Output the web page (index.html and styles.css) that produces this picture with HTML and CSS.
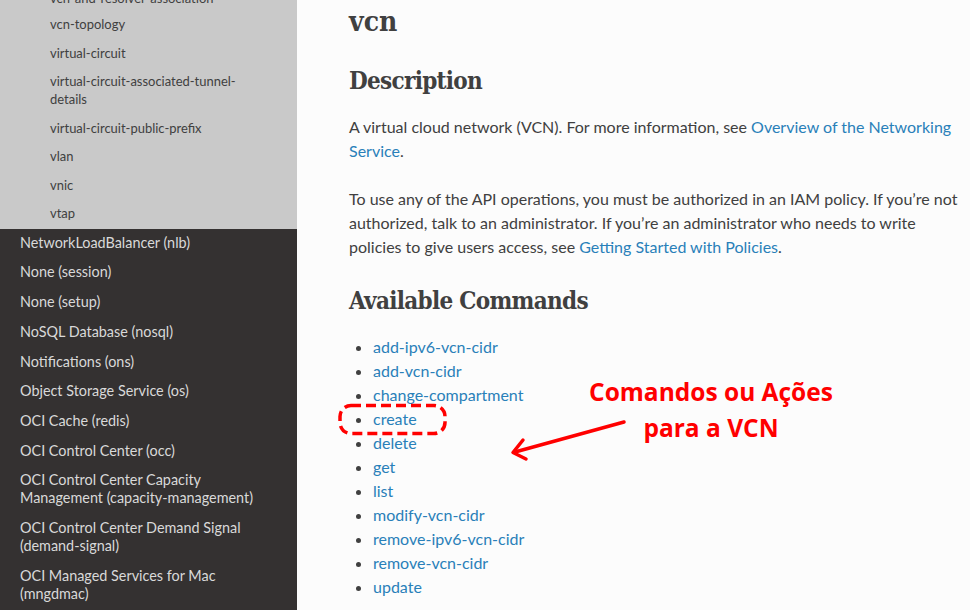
FILE: index.html
```html
<!DOCTYPE html>
<html lang="en">
<head>
<meta charset="utf-8">
<title>vcn</title>
<link rel="stylesheet" href="styles.css">
</head>
<body>
<div class="page">
  <nav class="nav">
    <ul class="sub-list">
      <li><a>vcn-and-resolver-association</a></li>
      <li><a>vcn-topology</a></li>
      <li><a>virtual-circuit</a></li>
      <li><a>virtual-circuit-associated-tunnel-details</a></li>
      <li><a>virtual-circuit-public-prefix</a></li>
      <li><a>vlan</a></li>
      <li><a>vnic</a></li>
      <li><a>vtap</a></li>
    </ul>
    <ul class="top-list">
      <li><a>NetworkLoadBalancer (nlb)</a></li>
      <li><a>None (session)</a></li>
      <li><a>None (setup)</a></li>
      <li><a>NoSQL Database (nosql)</a></li>
      <li><a>Notifications (ons)</a></li>
      <li><a>Object Storage Service (os)</a></li>
      <li><a>OCI Cache (redis)</a></li>
      <li><a>OCI Control Center (occ)</a></li>
      <li><a>OCI Control Center Capacity Management (capacity-management)</a></li>
      <li><a>OCI Control Center Demand Signal (demand-signal)</a></li>
      <li><a>OCI Managed Services for Mac (mngdmac)</a></li>
    </ul>
  </nav>
  <main class="main">
    <div class="content">
      <h1 class="title">vcn</h1>
      <h2 class="section-title">Description</h2>
      <p class="para">A virtual cloud network (VCN). For more information, see <a class="link">Overview of the Networking Service</a>.</p>
      <p class="para">To use any of the API operations, you must be authorized in an IAM policy. If you’re not<br>authorized, talk to an administrator. If you’re an administrator who needs to write<br>policies to give users access, see <a class="link">Getting Started with Policies</a>.</p>
      <h2 class="section-title">Available Commands</h2>
      <ul class="commands">
        <li><a class="link">add-ipv6-vcn-cidr</a></li>
        <li><a class="link">add-vcn-cidr</a></li>
        <li><a class="link">change-compartment</a></li>
        <li><a class="link">create</a></li>
        <li><a class="link">delete</a></li>
        <li><a class="link">get</a></li>
        <li><a class="link">list</a></li>
        <li><a class="link">modify-vcn-cidr</a></li>
        <li><a class="link">remove-ipv6-vcn-cidr</a></li>
        <li><a class="link">remove-vcn-cidr</a></li>
        <li><a class="link">update</a></li>
      </ul>
    </div>
    <svg class="overlay" width="673" height="610" viewBox="297 0 673 610" xmlns="http://www.w3.org/2000/svg">
      <rect x="340" y="405.5" width="105" height="28" rx="11" ry="11" fill="none" stroke="#f00" stroke-width="3.5" stroke-dasharray="10 5"/>
      <line x1="624" y1="422" x2="515" y2="452" stroke="#f00" stroke-width="3.5" stroke-linecap="round"/>
      <polyline points="523,440 513,452.5 526,459" fill="none" stroke="#f00" stroke-width="3.5" stroke-linecap="round" stroke-linejoin="round"/>
    </svg>
    <div class="callout">Comandos ou Ações<br>para a VCN</div>
  </main>
</div>
</body>
</html>
```

FILE: styles.css
```css
html, body {
  margin: 0;
  padding: 0;
  overflow: hidden;
  height: 100%;
}
body {
  font-family: Lato, "Open Sans", sans-serif;
  color: #404040;
  background: #fcfcfc;
}
.page {
  display: flex;
  height: 610px;
  overflow: hidden;
}
.nav {
  width: 297px;
  flex: none;
  background: #343131;
  overflow: hidden;
  display: flex;
  flex-direction: column;
}
.nav ul {
  list-style: none;
  margin: 0;
  padding: 0;
}
.nav a {
  display: block;
  line-height: 18px;
}
.sub-list {
  background: #c9c9c9;
  margin-top: -16.7px !important;
  padding-bottom: 1px !important;
}
.sub-list a {
  font-size: 12.96px;
  color: #404040;
  padding: 5.3px 30px 5.3px 50px;
}
.sub-list li:first-child a {
  padding-bottom: 3px;
}
.top-list a {
  font-size: 14.4px;
  color: #d9d9d9;
  padding: 5px 20px 6.7px 20px;
}
.main {
  flex: 1;
  position: relative;
  min-width: 0;
}
.content {
  padding: 5px 0 0 52px;
  width: 640px;
}
.title {
  font-family: "DejaVu Serif Condensed", "DejaVu Serif", serif;
  font-weight: 700;
  font-size: 28px;
  line-height: 34px;
  margin: 0 0 24px;
}
.section-title {
  font-family: "DejaVu Serif Condensed", "DejaVu Serif", serif;
  font-weight: 700;
  font-size: 24px;
  letter-spacing: -0.7px;
  line-height: 34px;
  margin: 0 0 18px;
  padding-top: 1px;
  height: 33px;
}
.para {
  font-size: 16px;
  line-height: 24px;
  margin: 0 0 24px;
}
.link {
  color: #2980b9;
  text-decoration: none;
}
.commands {
  margin: 0;
  padding-left: 24px;
  list-style: disc;
  font-size: 16px;
  line-height: 24px;
}
.overlay {
  position: absolute;
  left: 0;
  top: 0;
  pointer-events: none;
}
.callout {
  position: absolute;
  left: 264px;
  top: 374px;
  width: 300px;
  text-align: center;
  font-family: "Open Sans", sans-serif;
  font-weight: 700;
  font-size: 24.5px;
  line-height: 36px;
  color: #f00;
}
```
